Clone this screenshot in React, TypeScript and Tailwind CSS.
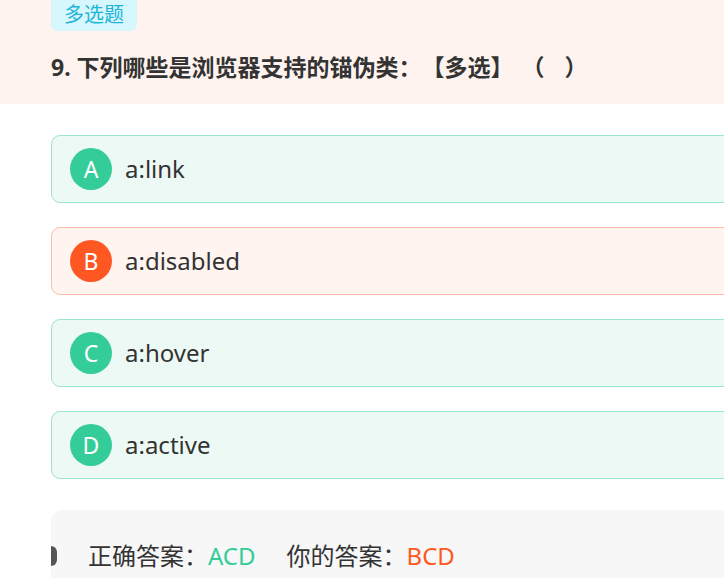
import React from 'react';

interface OptionProps {
  letter: string;
  text: string;
  wrong?: boolean;
}

const Option: React.FC<OptionProps> = ({ letter, text, wrong }) => {
  return (
    <div
      className={
        'flex items-center h-[68px] w-[720px] rounded-[9px] border pl-[18px] ' +
        (wrong ? 'bg-[#fff4f0] border-[#ffbba3]' : 'bg-[#edf9f5] border-[#9be6c9]')
      }
    >
      <span
        className={
          'flex items-center justify-center w-[42px] h-[42px] rounded-full text-white text-[23px] ' +
          (wrong ? 'bg-[#ff5722]' : 'bg-[#34cc99]')
        }
      >
        {letter}
      </span>
      <span className="ml-[13px] text-[24px] text-[#333]">{text}</span>
    </div>
  );
};

const App: React.FC = () => {
  return (
    <div
      className="w-[724px] h-[578px] overflow-hidden bg-white [text-spacing-trim:space-all]"
      style={{ fontFamily: '"Noto Sans", "Noto Sans CJK SC", sans-serif' }}
    >
      <div className="bg-[#fff3ef] h-[104px] pl-[51px]">
        <div className="inline-flex items-center h-[40px] -mt-[9px] pt-[8px] px-[13px] rounded-[7px] bg-[#d6f7fd] text-[#1db4d6] text-[20px]">
          多选题
        </div>
        <h2 className="mt-[20px] text-[23px] font-bold text-[#333] leading-[32px]">
          9. 下列哪些是浏览器支持的锚伪类：【多选】
          <span className="inline-block w-[31px] text-right">（</span>
          <span className="inline-block w-[20px]" />
          <span className="inline-block w-[23px] text-left">）</span>
        </h2>
      </div>

      <div className="pl-[51px] pt-[31px] flex flex-col gap-[24px]">
        <Option letter="A" text="a:link" />
        <Option letter="B" text="a:disabled" wrong />
        <Option letter="C" text="a:hover" />
        <Option letter="D" text="a:active" />
      </div>

      <div className="ml-[51px] mt-[31px] w-[720px] h-[80px] bg-[#f7f7f7] rounded-tl-[12px] flex items-center pt-[12px]">
        <span className="w-[6px] h-[20px] rounded-r-full bg-[#555]" />
        <span className="ml-[31px] text-[24px] text-[#333]">正确答案：</span>
        <span className="text-[24px] text-[#34cc99]">ACD</span>
        <span className="ml-[31px] text-[24px] text-[#333]">你的答案：</span>
        <span className="text-[24px] text-[#ff5722]">BCD</span>
      </div>
    </div>
  );
};

export default App;
